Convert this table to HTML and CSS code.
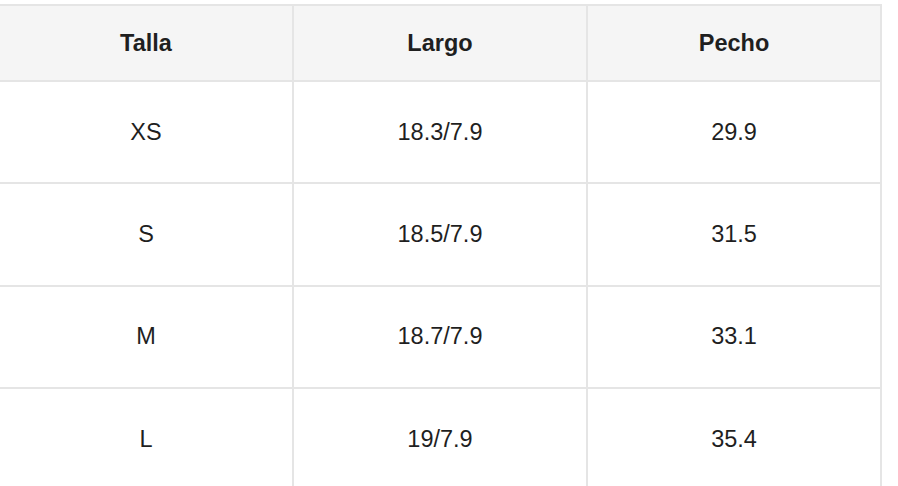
FILE: index.html
```html
<!DOCTYPE html>
<html lang="es">
<head>
<meta charset="utf-8">
<title>Tabla de tallas</title>
<link rel="stylesheet" href="styles.css">
</head>
<body>
<div class="size-table">
  <div class="cell head">Talla</div>
  <div class="cell head">Largo</div>
  <div class="cell head">Pecho</div>

  <div class="cell">XS</div>
  <div class="cell">18.3/7.9</div>
  <div class="cell">29.9</div>

  <div class="cell">S</div>
  <div class="cell">18.5/7.9</div>
  <div class="cell">31.5</div>

  <div class="cell">M</div>
  <div class="cell">18.7/7.9</div>
  <div class="cell">33.1</div>

  <div class="cell">L</div>
  <div class="cell">19/7.9</div>
  <div class="cell">35.4</div>
</div>
</body>
</html>
```
FILE: styles.css
```css
html, body {
  margin: 0;
  padding: 0;
  background: #ffffff;
}

body {
  font-family: "Liberation Sans", Arial, sans-serif;
  color: #1f1f1f;
  overflow: hidden;
}

.size-table {
  width: 884px;
  margin: 4px 0 0 -2px;
  box-sizing: border-box;
  border-top: 2px solid #e5e5e5;
  border-right: 2px solid #e5e5e5;
  display: grid;
  grid-template-columns: repeat(3, 294px);
  grid-template-rows: 76px;
  grid-auto-rows: 102.33px;
}

.cell {
  box-sizing: border-box;
  border-left: 2px solid #e5e5e5;
  border-bottom: 2px solid #e5e5e5;
  display: flex;
  align-items: center;
  justify-content: center;
  font-size: 23.5px;
}

.head {
  background: #f5f5f5;
  font-weight: bold;
}
```
